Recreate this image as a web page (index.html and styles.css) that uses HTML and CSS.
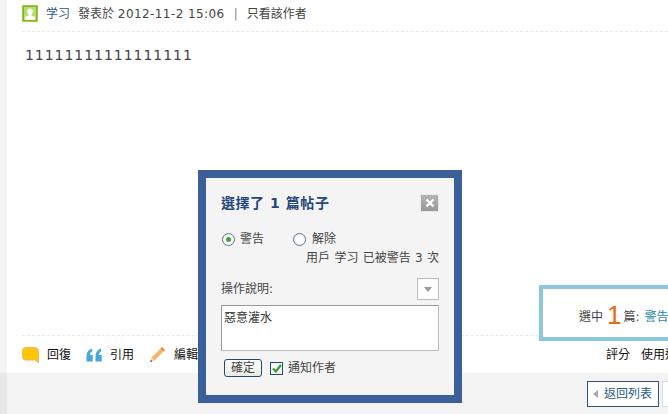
FILE: index.html
```html
<!DOCTYPE html>
<html lang="zh-Hant">
<head>
<meta charset="utf-8">
<title>選擇了 1 篇帖子</title>
<link rel="stylesheet" href="styles.css">
</head>
<body>
<div class="page">
  <div class="top">
    <div class="gutter"></div>
    <main class="post">
      <div class="meta">
        <svg class="avatar" width="16" height="17" viewBox="0 0 16 17"><rect width="16" height="17" rx="1" fill="#9ccc3c"/><rect x="1" y="1" width="14" height="15" fill="#7fb52a"/><rect x="2" y="2" width="12" height="13" fill="#b7db6e"/><path d="M8 3.500c1.800 0 2.800 1.300 2.800 3 0 1.200-.5 2.200-1.200 2.800v1.100l3.400 1.500V15H3v-3.100l3.400-1.500V9.300C5.700 8.700 5.200 7.700 5.200 6.500c0-1.700 1-3 2.800-3z" fill="#fff"/></svg>
        <a class="author">学习</a>
        <span class="time">發表於 <span class="date">2012-11-2 15:06</span></span>
        <span class="sep">|</span>
        <span class="time">只看該作者</span>
      </div>
      <div class="content">11111111111111111</div>
      <div class="actions">
        <span class="act act-reply">
          <svg width="17" height="16" viewBox="0 0 17 16"><path d="M4.500.7h7.500c2.500 0 4.300 1.500 4.300 4v10.600l-3-2.300H4.500C2.200 13 .7 11.500.7 9.300V4.500C.7 2.200 2.200.7 4.500.7z" fill="#ffc800" stroke="#f2b650" stroke-width="1.200"/></svg>
          回復
        </span>
        <span class="act act-quote">
          <svg width="16" height="14" viewBox="0 0 16 14"><path d="M5.500.5C2.500 2 .5 4.500.5 8v5.500h6.200V7H3.800c.2-1.800 1.200-3 2.700-4zM14.500.5c-3 1.500-5 4-5 7.500v5.500h6.200V7h-2.900c.2-1.800 1.200-3 2.700-4z" fill="#45a8da"/></svg>
          引用
        </span>
        <span class="act act-edit">
          <svg width="17" height="17" viewBox="0 0 17 17"><path d="M13 1 16 4 5.500 14.500 1.500 15.500 2.500 11.500z" fill="#f6b46e"/><path d="M13 1 16 4 14.500 5.500 11.500 2.500z" fill="#ee8f56"/><path d="M2.500 11.500 5.500 14.500 1.500 15.500z" fill="#f8dcb8"/><path d="M1.300 16 1.800 13.800 3.400 15.400z" fill="#444"/></svg>
          編輯
        </span>
        <span class="act-right">評分</span>
        <span class="act-clip">使用道具</span>
      </div>
    </main>
  </div>
  <footer class="foot">
    <div class="gutter gutter-low"></div>
    <div class="foot-main">
      <a class="back"><i class="back-arrow"></i>返回列表</a>
      <span class="foot-box"></span>
    </div>
  </footer>
</div>

<div class="panel">選中 <b class="num">1</b> 篇: <a class="warn">警告</a></div>

<section class="dialog">
  <div class="dlg-head">
    <h3 class="dlg-title">選擇了 1 篇帖子</h3>
    <span class="close"><svg width="10" height="10" viewBox="0 0 10 10"><path d="M1.500 1.500l7 7M8.500 1.500l-7 7" stroke="#fff" stroke-width="2.400"/></svg></span>
  </div>
  <div class="radios">
    <label class="radio"><i class="dot on"></i>警告</label>
    <label class="radio"><i class="dot"></i>解除</label>
  </div>
  <div class="info">用戶 学习 已被警告 3 次</div>
  <div class="reason-row">
    <span>操作說明:</span>
    <span class="select"><i class="caret"></i></span>
  </div>
  <div class="area">惡意灌水</div>
  <div class="dlg-foot">
    <span class="ok">確定</span>
    <i class="check"><svg width="10" height="9" viewBox="0 0 10 9"><path d="M1 4.500 3.800 7.500 9 1" fill="none" stroke="#3a9a3a" stroke-width="2.200"/></svg></i>
    <span>通知作者</span>
  </div>
</section>
</body>
</html>
```
FILE: styles.css
```css
* { box-sizing: border-box; }
html, body { margin: 0; height: 414px; overflow: hidden; }
body {
  position: relative;
  font: 12px/16px "DejaVu Sans", "Noto Sans CJK TC", sans-serif;
  color: #444;
  background: #f3f3f3;
}
.page { display: flex; flex-direction: column; height: 414px; }
.top { display: flex; height: 373px; }
.gutter { width: 7px; background: #f4f4f4; flex: none; }
.gutter-low { background: #e8e8e8; }
.post { flex: 1; background: #fff; padding: 0 0 0 15px; display: flex; flex-direction: column; min-width: 0; }
.meta {
  display: flex; align-items: center; height: 32px; padding: 0 0 4px;
  border-bottom: 1px dashed #e8e8e8; white-space: nowrap;
}
.avatar { margin-right: 8px; }
.author { color: #2b5a80; margin-right: 8px; }
.date { letter-spacing: .42px; }
.sep { margin: 0 9px; color: #888; }
.content { margin-top: 15px; padding-left: 3px; font: 14px/16px "DejaVu Sans", sans-serif; letter-spacing: .96px; color: #444; flex: 1; border-bottom: 1px dashed #e8e8e8; }
.actions { display: flex; align-items: center; height: 37px; color: #111; white-space: nowrap; overflow: hidden; }
.act { display: flex; align-items: center; }
.act svg { margin-right: 8px; }
.act-quote { margin-left: 15px; }
.act-edit { margin-left: 15px; }
.act-right { margin-left: auto; margin-right: 11px; }
.act-clip { flex: none; width: 27px; overflow: hidden; }
.foot { flex: 1; display: flex; }
.foot-main { flex: 1; display: flex; justify-content: flex-end; align-items: flex-start; padding-top: 8px; gap: 3px; }
.back {
  display: flex; align-items: center; width: 72px; height: 26px; padding-left: 5px;
  background: #fff; border: 1px solid #2f5374; color: #2b5a80;
}
.back-arrow { width: 0; height: 0; border: 4px solid transparent; border-right: 5px solid #aaa; border-left: 0; margin-right: 6px; }
.foot-box { width: 6px; height: 26px; background: #fff; border: 1px solid #ddd; border-right: 0; }

.panel {
  position: absolute; left: 539px; top: 285px; width: 140px; height: 56px;
  border: 4px solid #8cc8dd; background: #fff;
  padding: 8px 0 0 36px; white-space: nowrap; color: #444;
  display: flex; align-items: center; gap: 3px;
}
.num { font: 400 26px/24px "Liberation Sans", sans-serif; color: #e86a10; margin: -4px -1px 0 1px; }
.warn { color: #1c8aa8; margin-left: 2px; }

.dialog {
  position: absolute; left: 198px; top: 170px; width: 264px; height: 233px;
  border: 8px solid #3a5f99; background: #f4f4f4;
  padding: 16px 15px 0 15px; display: flex; flex-direction: column;
}
.dlg-head { display: flex; justify-content: space-between; align-items: center; height: 18px; }
.dlg-title { margin: 0; font-size: 14px; font-weight: 700; color: #25477a; letter-spacing: .55px; }
.close { width: 19px; height: 18px; background: linear-gradient(#b4b4b4, #999); border: 1px solid #e8e8e8; display: flex; align-items: center; justify-content: center; }
.radios { display: flex; margin-top: 19px; gap: 28px; height: 16px; }
.radio { display: flex; align-items: center; }
.dot { width: 13px; height: 13px; border-radius: 50%; border: 1px solid #5a7390; background: radial-gradient(circle at 60% 60%, #fff 50%, #ddd); margin: 0 5px 0 1px; position: relative; }
.dot.on::after { content: ""; position: absolute; left: 3px; top: 3px; width: 5px; height: 5px; border-radius: 50%; background: #3aa83a; }
.radio + .radio .dot { margin-right: 6px; }
.info { text-align: right; margin-top: 3px; height: 16px; word-spacing: .5px; }
.reason-row { display: flex; justify-content: space-between; align-items: center; margin-top: 12px; height: 22px; }
.select { width: 22px; height: 22px; background: #fff; border: 1px solid #bbb; display: flex; align-items: center; justify-content: center; }
.caret { width: 0; height: 0; border: 4px solid transparent; border-top: 5px solid #999; border-bottom: 0; }
.area { margin-top: 5px; height: 46px; background: #fff; border: 1px solid #bbb; border-top-color: #999; border-left-color: #999; padding: 4px 2px; color: #333; }
.dlg-foot { display: flex; align-items: center; margin-top: 7px; padding-left: 3px; height: 20px; }
.ok { width: 38px; height: 18px; border: 1px solid #234a6e; border-radius: 3px; background: linear-gradient(#fff, #e8e8e0); text-align: center; line-height: 16px; margin-right: 8px; }
.check { width: 13px; height: 13px; border: 1px solid #234a6e; background: #f4f8f4; display: flex; align-items: center; justify-content: center; margin-right: 5px; }
```
